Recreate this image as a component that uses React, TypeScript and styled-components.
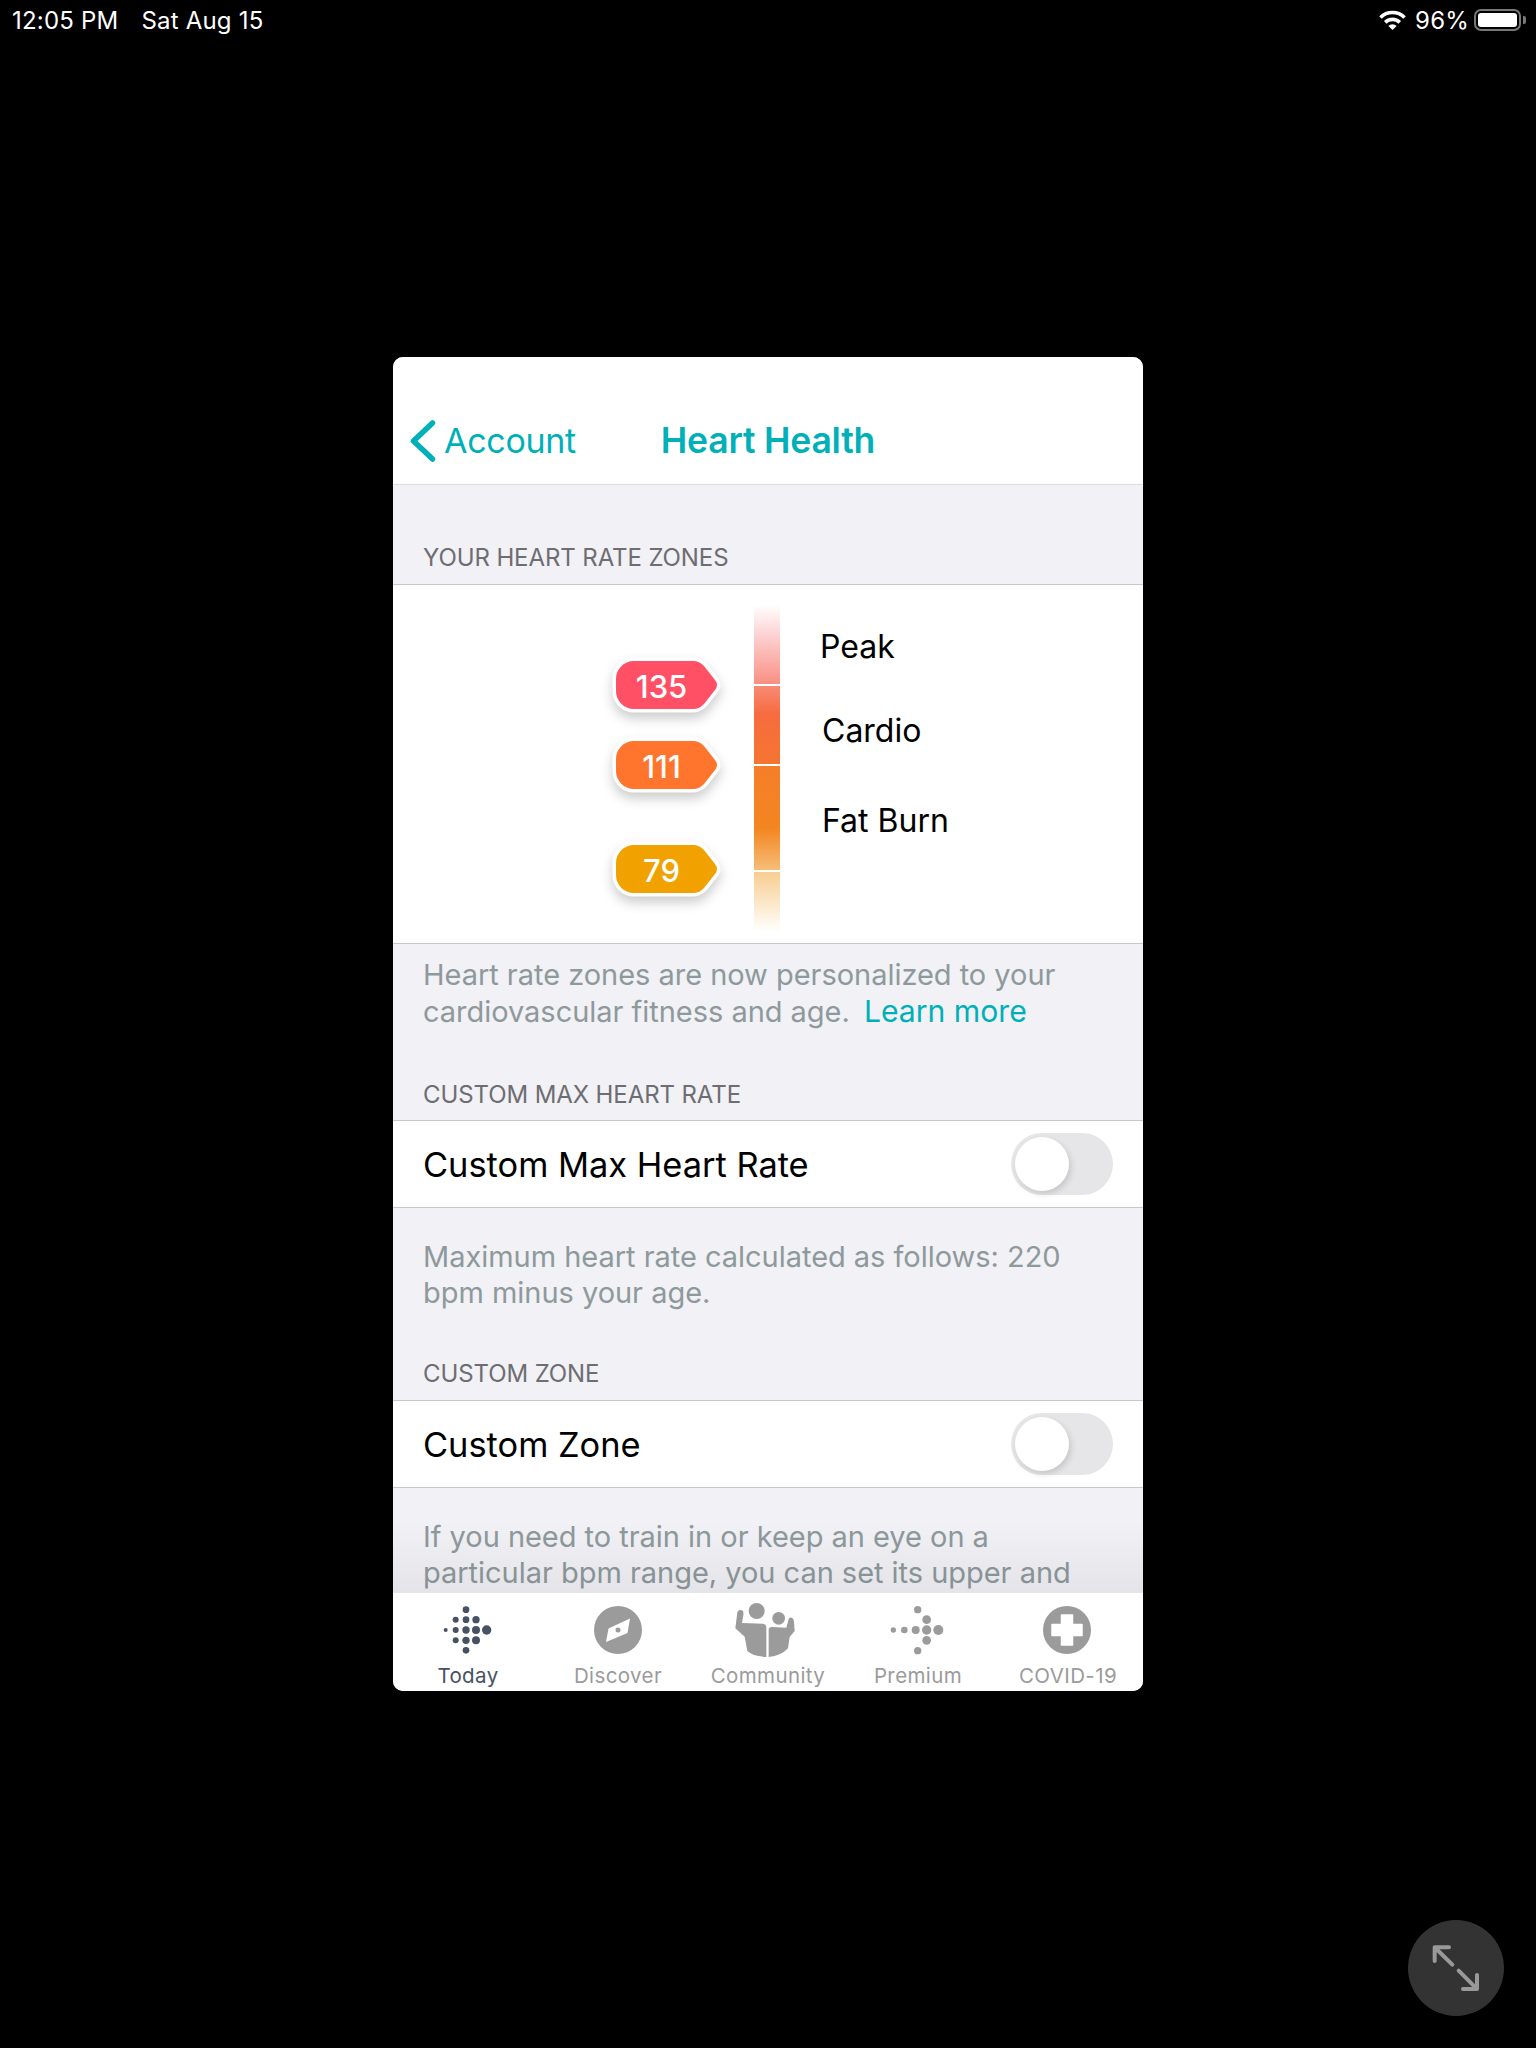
import React from "react";
import styled, { createGlobalStyle } from "styled-components";

const Global = createGlobalStyle`
  html, body { margin: 0; padding: 0; background: #000; }
  body { font-family: Inter, "Noto Sans", "Liberation Sans", sans-serif; -webkit-font-smoothing: antialiased; }
  * { box-sizing: border-box; }
`;

const Page = styled.div`
  position: relative;
  width: 1536px;
  height: 2048px;
  background: #000;
  overflow: hidden;
`;

const StatusBar = styled.div`
  display: flex;
  justify-content: space-between;
  align-items: center;
  height: 40px;
  padding: 0 10px 0 12px;
  color: #fff;
  font-size: 24px;
  letter-spacing: 0.2px;
`;
const StatusGroup = styled.div<{ $gap: number }>`
  display: flex;
  align-items: center;
  gap: ${(p) => p.$gap}px;
`;
const Battery = styled.div`
  display: flex;
  align-items: center;
  gap: 2px;
`;
const BatteryBody = styled.div`
  width: 47px;
  height: 22px;
  border: 2px solid #777;
  border-radius: 7px;
  padding: 2px;
`;
const BatteryFill = styled.div`
  height: 100%;
  background: #fff;
  border-radius: 3px;
`;
const BatteryTip = styled.div`
  width: 3px;
  height: 8px;
  background: #777;
  border-radius: 0 2px 2px 0;
`;

const Modal = styled.div`
  display: flex;
  flex-direction: column;
  width: 750px;
  height: 1334px;
  margin: 317px auto 0;
  border-radius: 10px;
  background: #f1f1f6;
  overflow: hidden;
`;

const Nav = styled.div`
  flex: none;
  display: grid;
  grid-template-columns: 1fr auto 1fr;
  align-items: center;
  height: 128px;
  padding: 62px 0 25px;
  background: #fff;
  border-bottom: 1px solid #dcdcdf;
`;
const Back = styled.div`
  display: flex;
  align-items: center;
  gap: 8px;
  padding-left: 17px;
  color: #00b0b9;
  font-size: 34px;
  line-height: 40px;
  letter-spacing: -0.3px;
`;
const Title = styled.div`
  color: #00b0b9;
  font-size: 35.5px;
  font-weight: 600;
  line-height: 40px;
  letter-spacing: -0.2px;
`;

const Scroll = styled.div`
  position: relative;
  flex: 1;
  min-height: 0;
  overflow: hidden;
`;
const TabShade = styled.div`
  position: absolute;
  left: 0;
  right: 0;
  bottom: 0;
  height: 72px;
  background: linear-gradient(rgba(0, 0, 0, 0), rgba(0, 0, 0, 0.055));
`;

const SectionHeader = styled.div<{ $top: number; $bottom?: number }>`
  padding: ${(p) => p.$top}px 30px ${(p) => p.$bottom ?? 12}px;
  color: #6d6d72;
  font-size: 24px;
  line-height: 28px;
  letter-spacing: -0.1px;
`;
const Card = styled.div`
  background: #fff;
  border-top: 1px solid #c8c7cc;
  border-bottom: 1px solid #c8c7cc;
`;
const Footnote = styled.div<{ $top: number }>`
  padding: ${(p) => p.$top}px 30px 0;
  color: #8e999c;
  font-size: 29px;
  line-height: 36px;
  letter-spacing: -0.03px;
`;
const LearnMore = styled.span`
  color: #00b0b9;
  font-size: 30.2px;
  margin-left: 6px;
`;

const Row = styled.div`
  display: flex;
  align-items: center;
  justify-content: space-between;
  height: 86px;
  padding: 0 30px;
  font-size: 34.4px;
  color: #000;
`;
const Toggle = styled.div`
  position: relative;
  width: 102px;
  height: 62px;
  border-radius: 31px;
  background: #e6e6e8;
`;
const Knob = styled.div`
  position: absolute;
  left: 4px;
  top: 4px;
  width: 54px;
  height: 54px;
  border-radius: 50%;
  background: #fff;
  box-shadow: 2px 3px 6px rgba(0, 0, 0, 0.14);
`;

const Chart = styled.div`
  display: grid;
  grid-template-columns: 361px 26px 1fr;
  height: 358px;
`;
const BadgeColumn = styled.div`
  display: flex;
  flex-direction: column;
  align-items: flex-start;
  padding: 76px 0 0 223px;
`;
const BadgeBox = styled.div<{ $top: number }>`
  position: relative;
  width: 100px;
  height: 48px;
  margin-top: ${(p) => p.$top}px;
`;
const BadgeShape = styled.svg`
  position: absolute;
  left: -6px;
  top: -6px;
  width: 114px;
  height: 66px;
  overflow: visible;
  filter: drop-shadow(0 6px 6px rgba(0, 0, 0, 0.2));
`;
const BadgeText = styled.div`
  position: relative;
  width: 91px;
  text-align: center;
  color: #fff;
  font-size: 31px;
  font-weight: 500;
  line-height: 52px;
`;
const ZoneBar = styled.div`
  display: flex;
  flex-direction: column;
  gap: 2px;
  padding-top: 20px;
`;
const ZoneSegment = styled.div<{ $h: number; $bg: string }>`
  height: ${(p) => p.$h}px;
  background: ${(p) => p.$bg};
`;
const LabelColumn = styled.div`
  display: flex;
  flex-direction: column;
  padding: 42px 0 0 40px;
`;
const ZoneLabel = styled.div<{ $top: number; $left?: number }>`
  margin-top: ${(p) => p.$top}px;
  margin-left: ${(p) => p.$left ?? 0}px;
  color: #000;
  font-size: 32px;
  line-height: 40px;
`;

const TabBar = styled.div`
  flex: none;
  display: grid;
  grid-template-columns: repeat(5, 150px);
  height: 98px;
  padding-top: 5px;
  background: #fff;
`;
const Tab = styled.div<{ $active?: boolean }>`
  display: flex;
  flex-direction: column;
  align-items: center;
  color: ${(p) => (p.$active ? "#465162" : "#9b9b9b")};
  font-size: 20.5px;
  line-height: 28px;
  letter-spacing: 0.4px;
`;
const TabIcon = styled.svg`
  display: block;
  flex: none;
  width: 100px;
  height: 64px;
`;

const ExpandButton = styled.div`
  position: absolute;
  left: 1408px;
  top: 1920px;
  width: 96px;
  height: 96px;
  border-radius: 50%;
  background: #333;
`;

const Wifi = () => (
  <svg width="27" height="22" viewBox="0 0 27 22" fill="none">
    <path d="M1.5 8.5A17 17 0 0 1 25.5 8.5" stroke="#fff" strokeWidth="3.6" />
    <path d="M6.2 13.4A10.4 10.4 0 0 1 20.8 13.4" stroke="#fff" strokeWidth="3.6" />
    <path d="M13.5 21L9.4 16.9A5.8 5.8 0 0 1 17.6 16.9Z" fill="#fff" />
  </svg>
);

const Chevron = () => (
  <svg width="26" height="44" viewBox="0 0 26 44" fill="none">
    <path d="M22.5 4L3.5 22L22.5 40" stroke="#00b0b9" strokeWidth="5.5" strokeLinecap="round" strokeLinejoin="round" />
  </svg>
);

const Badge = ({ value, color, top }: { value: string; color: string; top: number }) => (
  <BadgeBox $top={top}>
    <BadgeShape viewBox="-6 -6 114 66">
      <path
        d="M18 0H76C82 0 85 2 88 5L99 19Q103 24 99 29L88 43C85 46 82 48 76 48H18C8 48 0 40 0 30V18C0 8 8 0 18 0Z"
        fill={color}
        stroke="#fff"
        strokeWidth="7"
        paintOrder="stroke"
        strokeLinejoin="round"
      />
    </BadgeShape>
    <BadgeText>{value}</BadgeText>
  </BadgeBox>
);

type Dot = [number, number, number];
const DotLogo = ({ dots, color, box }: { dots: Dot[]; color: string; box: string }) => (
  <TabIcon viewBox={box}>
    {dots.map(([x, y, r]) => (
      <circle key={`${x}-${y}`} cx={x} cy={y} r={r} fill={color} />
    ))}
  </TabIcon>
);

const todayDots: Dot[] = [
  [228, 58, 10], [228, 88, 10], [228, 119, 11], [228, 150, 11], [228, 180, 10],
  [197, 88, 9], [197, 119, 9], [197, 150, 9],
  [258, 88, 11], [258, 119, 12], [258, 150, 12],
  [167, 119, 6], [290, 119, 14],
];
const premiumDots: Dot[] = [
  [340, 119, 8], [373, 119, 10], [407, 119, 12], [440, 119, 14], [475, 119, 15],
  [413, 58, 11], [440, 88, 13], [440, 150, 13], [413, 181, 11],
];

const CompassIcon = () => (
  <TabIcon viewBox="-50 -32 100 64">
    <circle r="24" fill="#9b9b9b" />
    <path d="M12 -11.5L-9.5 -1.5L-12 12L9.5 3Z" fill="#fff" strokeLinejoin="round" />
    <circle r="2.5" fill="#9b9b9b" />
  </TabIcon>
);

const CommunityIcon = () => (
  <TabIcon viewBox="0 9 300 192">
    <circle cx="116" cy="48" r="24" fill="#9b9b9b" />
    <circle cx="182" cy="70" r="19" fill="#9b9b9b" />
    <path
      d="M52 100L58 52Q62 42 72 46Q78 48 76 60L72 84L135 86Q145 88 145 98V186Q105 184 88 168L80 125Z"
      fill="#9b9b9b"
    />
    <path
      d="M152 186V104Q152 96 162 96L205 98L212 72Q214 66 222 68Q228 72 228 80L230 108L215 126L210 160Q190 182 152 186Z"
      fill="#9b9b9b"
    />
  </TabIcon>
);

const CovidIcon = () => (
  <TabIcon viewBox="-49 -32 100 64">
    <circle r="24" fill="#9b9b9b" />
    <path
      d="M-5.5 -15H5.5V-5.5H15V5.5H5.5V15H-5.5V5.5H-15V-5.5H-5.5Z"
      fill="#fff"
      stroke="#fff"
      strokeWidth="1.5"
      strokeLinejoin="round"
    />
  </TabIcon>
);

export default function App() {
  return (
    <Page>
      <Global />
      <StatusBar>
        <StatusGroup $gap={23}>
          <span>12:05 PM</span>
          <span>Sat Aug 15</span>
        </StatusGroup>
        <StatusGroup $gap={5}>
          <StatusGroup $gap={9}>
            <Wifi />
            <span>96%</span>
          </StatusGroup>
          <Battery>
            <BatteryBody>
              <BatteryFill />
            </BatteryBody>
            <BatteryTip />
          </Battery>
        </StatusGroup>
      </StatusBar>

      <Modal>
        <Nav>
          <Back>
            <Chevron />
            Account
          </Back>
          <Title>Heart Health</Title>
        </Nav>

        <Scroll>
          <SectionHeader $top={59}>YOUR HEART RATE ZONES</SectionHeader>
          <Card>
            <Chart>
              <BadgeColumn>
                <Badge value="135" color="#ff5066" top={0} />
                <Badge value="111" color="#ff752e" top={32} />
                <Badge value="79" color="#f2a200" top={56} />
              </BadgeColumn>
              <ZoneBar>
                <ZoneSegment $h={79} $bg="linear-gradient(#fff, #fdd5d6 35%, #f98f82)" />
                <ZoneSegment $h={78} $bg="linear-gradient(#f98a75, #f76c40 35%, #f5752f)" />
                <ZoneSegment $h={104} $bg="linear-gradient(#f57e29, #f38620 60%, #f6bd78)" />
                <ZoneSegment $h={60} $bg="linear-gradient(#f8cd90, #fff)" />
              </ZoneBar>
              <LabelColumn>
                <ZoneLabel $top={0}>Peak</ZoneLabel>
                <ZoneLabel $top={44} $left={2}>Cardio</ZoneLabel>
                <ZoneLabel $top={50} $left={2}>Fat Burn</ZoneLabel>
              </LabelColumn>
            </Chart>
          </Card>
          <Footnote $top={13}>
            Heart rate zones are now personalized to your cardiovascular fitness and age. <LearnMore>Learn more</LearnMore>
          </Footnote>

          <SectionHeader $top={51} $bottom={11}>CUSTOM MAX HEART RATE</SectionHeader>
          <Card>
            <Row>
              Custom Max Heart Rate
              <Toggle>
                <Knob />
              </Toggle>
            </Row>
          </Card>
          <Footnote $top={31}>Maximum heart rate calculated as follows: 220 bpm minus your age.</Footnote>

          <SectionHeader $top={49}>CUSTOM ZONE</SectionHeader>
          <Card>
            <Row>
              Custom Zone
              <Toggle>
                <Knob />
              </Toggle>
            </Row>
          </Card>
          <Footnote $top={31}>
            If you need to train in or keep an eye on a particular bpm range, you can set its upper and lower limits.
          </Footnote>
          <TabShade />
        </Scroll>

        <TabBar>
          <Tab $active>
            <DotLogo dots={todayDots} color="#465162" box="84 23 300 192" />
            Today
          </Tab>
          <Tab>
            <CompassIcon />
            Discover
          </Tab>
          <Tab>
            <CommunityIcon />
            Community
          </Tab>
          <Tab>
            <DotLogo dots={premiumDots} color="#9b9b9b" box="264 23 300 192" />
            Premium
          </Tab>
          <Tab>
            <CovidIcon />
            COVID-19
          </Tab>
        </TabBar>
      </Modal>

      <ExpandButton>
        <svg width="96" height="96" viewBox="55 60 288 288" fill="none">
          <path
            d="M135 183V142H178M137 144L188 194M262 225V267H220M207 212L260 265"
            stroke="#999"
            strokeWidth="12"
            strokeLinecap="round"
            strokeLinejoin="round"
          />
        </svg>
      </ExpandButton>
    </Page>
  );
}
